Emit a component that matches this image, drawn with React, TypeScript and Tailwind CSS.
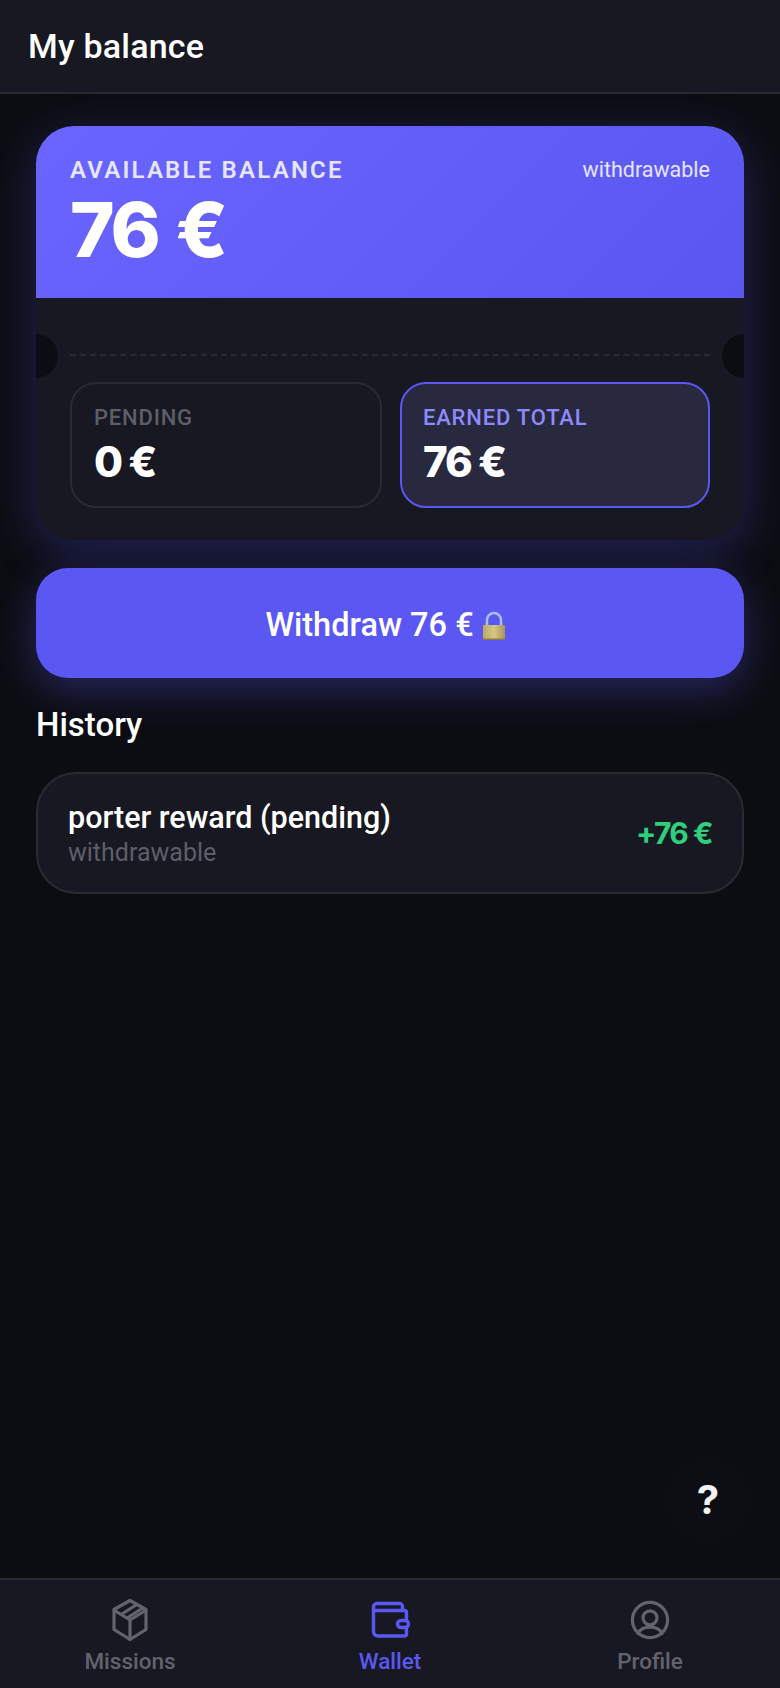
import React from 'react';

const plex = "font-['Roboto',sans-serif]";
const amount = "font-['Inter',sans-serif] font-extrabold";

const BoxIcon: React.FC = () => (
  <svg width="50" height="50" viewBox="0 0 50 50" fill="none" stroke="#63636e" strokeWidth="3.2" strokeLinejoin="round" strokeLinecap="round">
    <path d="M25 5.5 41 14.5v20L25 44.5 9 34.5v-20L25 5.5Z" />
    <path d="M9.5 15.5 25 25l15.5-9.5M25 25v19.5" />
    <path d="M17 19 31 10M23 22.5 37 13.5" />
  </svg>
);

const WalletIcon: React.FC = () => (
  <svg width="50" height="50" viewBox="0 0 50 50" fill="none" stroke="#5b57f2" strokeWidth="3.4" strokeLinejoin="round" strokeLinecap="round">
    <path d="M8.5 15.5V12a3.5 3.5 0 0 1 3.5-3.5h22.5a3 3 0 0 1 3 3v4" />
    <path d="M8.5 15.5h31a2 2 0 0 1 2 2V39a2 2 0 0 1-2 2H13a4.5 4.5 0 0 1-4.5-4.5v-21Z" />
    <rect x="32.5" y="25.5" width="11" height="7" rx="3.5" fill="#171821" />
  </svg>
);

const ProfileIcon: React.FC = () => (
  <svg width="50" height="50" viewBox="0 0 50 50" fill="none" stroke="#63636e" strokeWidth="3.2" strokeLinecap="round">
    <circle cx="25" cy="25" r="17.6" />
    <circle cx="25" cy="22.8" r="7" />
    <path d="M13 38.5C15 34.5 19 32.2 25 32.2s10 2.3 12 6.3" />
  </svg>
);

const LockIcon: React.FC = () => (
  <svg width="26" height="30" viewBox="0 0 26 30" className="ml-[7px]">
    <defs>
      <linearGradient id="lockBody" x1="0" y1="0" x2="1" y2="0">
        <stop offset="0" stopColor="#b9a964" />
        <stop offset="0.5" stopColor="#d6c883" />
        <stop offset="1" stopColor="#a8975a" />
      </linearGradient>
    </defs>
    <path d="M6 15V9a7 7 0 0 1 14 0v6" fill="none" stroke="#a9bfdc" strokeWidth="2.6" />
    <rect x="2" y="14" width="22" height="15" rx="1" fill="url(#lockBody)" />
    <rect x="2" y="27.5" width="22" height="1.5" fill="#8a7b45" />
  </svg>
);

const App: React.FC = () => {
  return (
    <div className={`${plex} relative flex h-[1688px] w-[780px] flex-col overflow-hidden bg-[#0c0d12] text-white`}>
      <header className="flex h-[94px] shrink-0 items-center border-b-2 border-[#2a2b30] bg-[#171821] px-7">
        <h1 className="text-[34px] font-medium tracking-[0.2px]">My balance</h1>
      </header>

      <main className="flex flex-1 flex-col px-9 pt-8">
        <section className="rounded-[38px] bg-[#171821] shadow-[0_12px_48px_rgba(91,87,242,0.3)]">
          <div className="flex h-[172px] items-start justify-between rounded-t-[38px] bg-[linear-gradient(135deg,#6a65ff,#5a56f0)] px-[34px] pt-8">
            <div>
              <p className="text-[24px] leading-[24px] font-semibold tracking-[2.2px] text-[#e6e5ff]">AVAILABLE BALANCE</p>
              <p className={`${amount} mt-[9px] text-[76px] leading-[76px] tracking-[-3px] [word-spacing:4px]`}>76 €</p>
            </div>
            <p className="text-[21.5px] leading-[24px] text-[#e6e5ff]">withdrawable</p>
          </div>

          <div className="relative px-[34px] pt-14 pb-8">
            <div className="absolute top-9 left-[-22px] h-11 w-11 rounded-full bg-[#0c0d12] [clip-path:inset(0_0_0_22px)]" />
            <div className="absolute top-9 right-[-22px] h-11 w-11 rounded-full bg-[#0c0d12] [clip-path:inset(0_22px_0_0)]" />
            <div className="border-t-2 border-dashed border-[#2a2b30] pt-[26px]">
              <div className="grid grid-cols-[312px_1fr] gap-[18px]">
                <div className="h-[126px] rounded-[26px] border-2 border-[#2a2b30] px-[22px] pt-[21px]">
                  <p className="text-[22px] leading-[26px] font-medium tracking-[0.8px] text-[#5e5e69]">PENDING</p>
                  <p className={`${amount} mt-[5px] text-[42px] leading-[52px] tracking-[-2px]`}>0 €</p>
                </div>
                <div className="h-[126px] rounded-[26px] border-2 border-[#5b57f2] bg-[#28283f] px-[21px] pt-[21px]">
                  <p className="text-[22px] leading-[26px] font-medium tracking-[0.8px] text-[#8d8afc]">EARNED TOTAL</p>
                  <p className={`${amount} mt-[5px] text-[42px] leading-[52px] tracking-[-2px]`}>76 €</p>
                </div>
              </div>
            </div>
          </div>
        </section>

        <button className="mt-7 flex h-[110px] shrink-0 items-center justify-center rounded-[32px] bg-[#5b57f2] pt-[5px] pr-[8px] text-[32.5px] font-medium shadow-[0_12px_40px_rgba(91,87,242,0.35)]">
          Withdraw 76 €
          <LockIcon />
        </button>

        <h2 className="mt-[27px] text-[33px] leading-[40px] font-medium">History</h2>

        <div className="mt-[27px] flex h-[122px] items-center justify-between rounded-[40px] border-2 border-[#2a2b30] bg-[#171821] pr-[30px] pl-[30px]">
          <div>
            <p className="text-[30.5px] leading-[40px] font-medium">porter reward (pending)</p>
            <p className="text-[25px] leading-[30px] text-[#5e5e69]">withdrawable</p>
          </div>
          <p className="font-['Inter',sans-serif] text-[30px] font-bold tracking-[-1.5px] text-[#2fcf7e]">+76 €</p>
        </div>
      </main>

      <button className="absolute top-[1460px] left-[668px] flex h-20 w-20 items-center justify-center rounded-full bg-[#0d0e13] font-['Inter',sans-serif] text-[40px] font-bold text-[#f2f2f2]">
        ?
      </button>

      <nav className="grid h-[110px] shrink-0 grid-cols-3 border-t-2 border-[#2a2b30] bg-[#171821]">
        <div className="flex flex-col items-center pt-[15px] text-[#63636e]">
          <BoxIcon />
          <span className="mt-[1px] text-[22.5px] leading-[30px] font-medium">Missions</span>
        </div>
        <div className="flex flex-col items-center pt-[15px] text-[#5b57f2]">
          <WalletIcon />
          <span className="mt-[1px] text-[22.5px] leading-[30px] font-medium">Wallet</span>
        </div>
        <div className="flex flex-col items-center pt-[15px] text-[#63636e]">
          <ProfileIcon />
          <span className="mt-[1px] text-[22.5px] leading-[30px] font-medium">Profile</span>
        </div>
      </nav>
    </div>
  );
};

export default App;
